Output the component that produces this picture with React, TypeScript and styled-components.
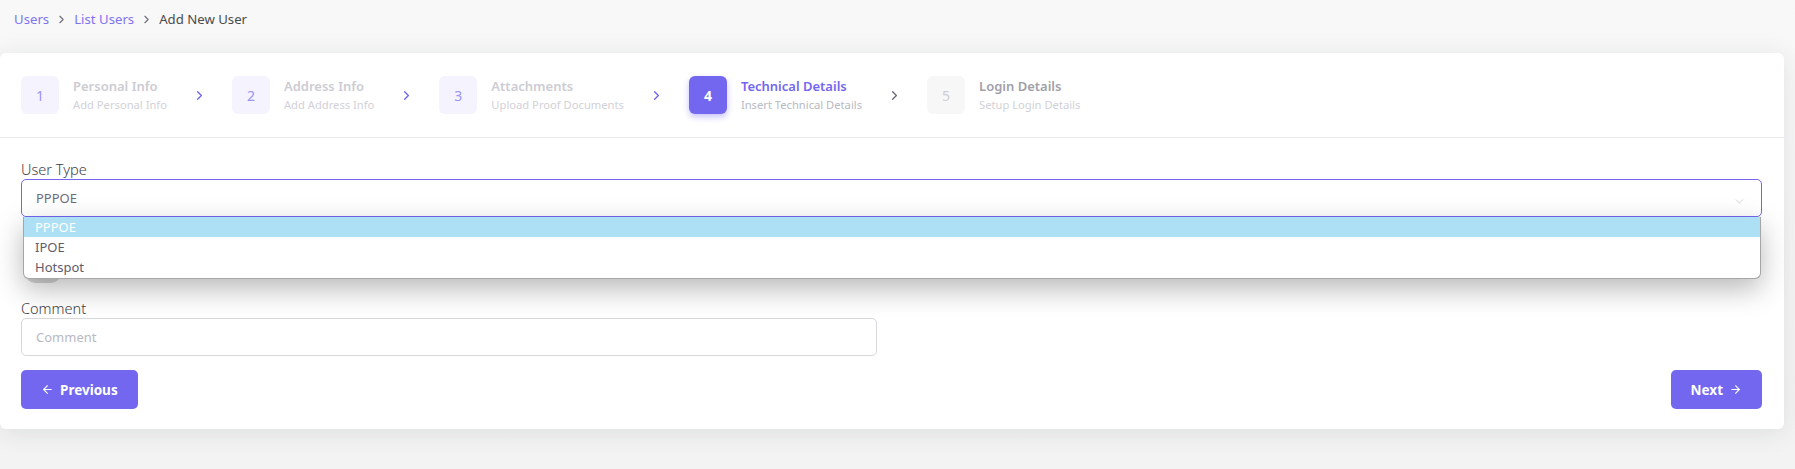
import { ArrowLeft, ArrowRight, ChevronDown, ChevronRight } from "lucide-react";
import styled, { createGlobalStyle, css } from "styled-components";

type StepState = "done" | "active" | "todo";

const steps: { title: string; subtitle: string; state: StepState }[] = [
  { title: "Personal Info", subtitle: "Add Personal Info", state: "done" },
  { title: "Address Info", subtitle: "Add Address Info", state: "done" },
  { title: "Attachments", subtitle: "Upload Proof Documents", state: "done" },
  { title: "Technical Details", subtitle: "Insert Technical Details", state: "active" },
  { title: "Login Details", subtitle: "Setup Login Details", state: "todo" },
];

const userTypes = ["PPPOE", "IPOE", "Hotspot"];

function App() {
  return (
    <>
      <GlobalStyle />
      <Page>
        <Breadcrumb>
          <CrumbLink>Users</CrumbLink>
          <ChevronRight size={13} strokeWidth={2} />
          <CrumbLink>List Users</CrumbLink>
          <ChevronRight size={13} strokeWidth={2} />
          <CrumbCurrent>Add New User</CrumbCurrent>
        </Breadcrumb>

        <Card>
          <StepperHeader>
            {steps.map((step, i) => (
              <StepWrap key={step.title}>
                <Step>
                  <StepBox $state={step.state}>{i + 1}</StepBox>
                  <StepText>
                    <StepTitle $state={step.state}>{step.title}</StepTitle>
                    <StepSubtitle $state={step.state}>{step.subtitle}</StepSubtitle>
                  </StepText>
                </Step>
                {i < steps.length - 1 && (
                  <StepArrow $muted={step.state === "active"}>
                    <ChevronRight size={15} strokeWidth={2.2} />
                  </StepArrow>
                )}
              </StepWrap>
            ))}
          </StepperHeader>

          <CardBody>
            <FormGroup>
              <Label>User Type</Label>
              <SelectWrap>
                <SelectBox>
                  <span>PPPOE</span>
                  <ChevronDown size={13} strokeWidth={1.5} />
                </SelectBox>
                <OptionList>
                  {userTypes.map((t, i) => (
                    <Option key={t} $selected={i === 0}>
                      {t}
                    </Option>
                  ))}
                </OptionList>
              </SelectWrap>
            </FormGroup>

            <SwitchGroup>
              <Switch />
            </SwitchGroup>

            <FormGroup>
              <Label>Comment</Label>
              <HalfInput placeholder="Comment" />
            </FormGroup>

            <Actions>
              <PrimaryButton>
                <ArrowLeft size={13} strokeWidth={2} />
                Previous
              </PrimaryButton>
              <PrimaryButton>
                Next
                <ArrowRight size={13} strokeWidth={2} />
              </PrimaryButton>
            </Actions>
          </CardBody>
        </Card>
      </Page>
    </>
  );
}

const GlobalStyle = createGlobalStyle`
  html, body {
    margin: 0;
    background: #f8f8f8;
  }
  body {
    font-family: "Noto Sans", "Open Sans", sans-serif;
    color: #6e6b7b;
  }
  * {
    box-sizing: border-box;
  }
`;

const Page = styled.div`
  min-height: 469px;
  padding: 0 11px 40px 0;
  background: linear-gradient(#f8f8f8, #f3f3f3);
`;

const Breadcrumb = styled.nav`
  display: flex;
  align-items: center;
  gap: 6px;
  height: 38px;
  padding-left: 14px;
  font-size: 13.2px;
  color: #5e5873;

  svg {
    color: #6e6b7b;
  }
`;

const CrumbLink = styled.span`
  color: #7f74f2;
`;

const CrumbCurrent = styled.span`
  color: #4b4b4b;
`;

const Card = styled.div`
  margin-top: 15px;
  background: #fff;
  border-radius: 6px;
  box-shadow: 0 4px 24px 0 rgba(34, 41, 47, 0.1);
`;

const StepperHeader = styled.div`
  display: flex;
  align-items: center;
  padding: 23px 21px;
  border-bottom: 1px solid #ebe9f1;
`;

const StepWrap = styled.div`
  display: flex;
  align-items: center;
`;

const Step = styled.div`
  display: flex;
  align-items: center;
  gap: 14px;
`;

const StepBox = styled.div<{ $state: StepState }>`
  width: 38px;
  height: 38px;
  border-radius: 6px;
  display: flex;
  align-items: center;
  justify-content: center;
  font-size: 14px;

  ${({ $state }) =>
    $state === "done" &&
    css`
      background: rgba(115, 103, 240, 0.08);
      color: #9b93f5;
    `}
  ${({ $state }) =>
    $state === "active" &&
    css`
      background: #7367f0;
      color: #fff;
      font-weight: 700;
      box-shadow: 0 3px 6px 0 rgba(115, 103, 240, 0.4);
    `}
  ${({ $state }) =>
    $state === "todo" &&
    css`
      background: rgba(186, 191, 199, 0.12);
      color: #cfcdd4;
    `}
`;

const StepText = styled.div`
  display: flex;
  flex-direction: column;
`;

const StepTitle = styled.div<{ $state: StepState }>`
  font-size: 13px;
  font-weight: 600;
  line-height: 19px;
  color: ${({ $state }) =>
    $state === "active" ? "#7367f0" : $state === "todo" ? "#a19fa9" : "#cdccd2"};
`;

const StepSubtitle = styled.div<{ $state: StepState }>`
  font-size: 11.2px;
  line-height: 17px;
  color: ${({ $state }) => ($state === "active" ? "#b9b9c3" : "#d2d1d7")};
`;

const StepArrow = styled.div<{ $muted: boolean }>`
  display: flex;
  margin: 0 25px;
  color: ${({ $muted }) => ($muted ? "#6e6b7b" : "#7367f0")};
`;

const CardBody = styled.div`
  padding: 22px 22px 20px 21px;
`;

const FormGroup = styled.div`
  margin-bottom: 14px;
`;

const SwitchGroup = styled.div`
  padding-top: 32px;
  margin-bottom: 16px;
`;

const Label = styled.div`
  font-size: 14.5px;
  font-weight: 300;
  line-height: 18px;
  color: #3f3d45;
  margin-bottom: 1px;
`;

const SelectWrap = styled.div`
  position: relative;
`;

const SelectBox = styled.div`
  display: flex;
  align-items: center;
  justify-content: space-between;
  height: 38px;
  padding: 0 14px 0 14px;
  border: 1px solid #7367f0;
  border-radius: 5px;
  font-size: 13px;
  color: #6e6b7b;
  background: #fff;

  svg {
    color: #c9c9cf;
    margin-top: 6px;
    margin-right: 1px;
  }
`;

const OptionList = styled.div`
  position: absolute;
  top: 100%;
  left: 2px;
  right: 1px;
  z-index: 10;
  background: #fff;
  border: 1px solid #a6a6a6;
  border-top: none;
  border-radius: 0 0 6px 6px;
  box-shadow: 0 10px 28px rgba(0, 0, 0, 0.28);
  overflow: hidden;
  padding-bottom: 1px;
`;

const Option = styled.div<{ $selected: boolean }>`
  height: 20px;
  line-height: 20px;
  padding-left: 11px;
  font-size: 13px;
  color: ${({ $selected }) => ($selected ? "#fff" : "#5f5b6a")};
  background: ${({ $selected }) => ($selected ? "#addff5" : "transparent")};
`;

const Switch = styled.div`
  width: 36px;
  height: 20px;
  margin-left: 4px;
  border-radius: 10px;
  background: #d6d6d6;
`;

const HalfInput = styled.input`
  display: block;
  width: 856px;
  height: 38px;
  padding: 0 14px;
  border: 1px solid #d8d6de;
  border-radius: 5px;
  font-family: inherit;
  font-size: 13px;
  color: #6e6b7b;
  outline: none;

  &::placeholder {
    color: #b9b9c3;
  }
`;

const Actions = styled.div`
  display: flex;
  justify-content: space-between;
  margin-top: 14px;
`;

const PrimaryButton = styled.button`
  display: flex;
  align-items: center;
  gap: 6px;
  height: 39px;
  padding: 0 20px;
  border: none;
  border-radius: 5px;
  background: #7367f0;
  color: #fff;
  font-family: inherit;
  font-size: 13.5px;
  font-weight: 700;
  cursor: pointer;
`;

export default App;
